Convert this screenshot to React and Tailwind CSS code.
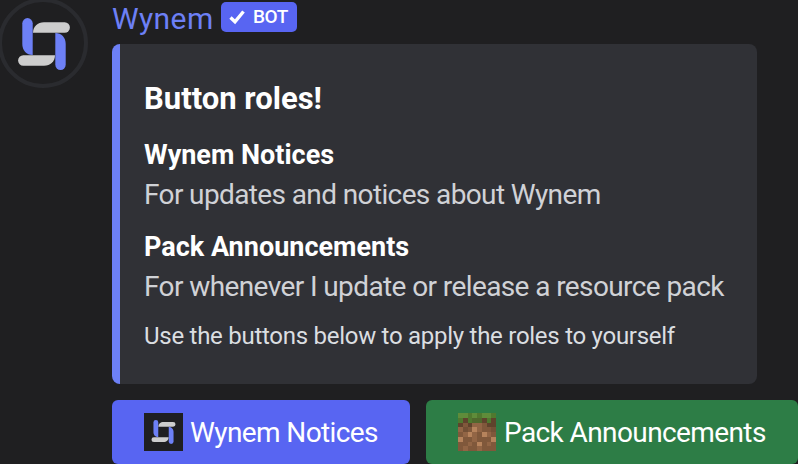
const DIRT = [
  "aababaab", "bdbccdbd", "dfdggfdd", "gefhgffe", "fghgfhgf", "hffgfffh", "ffgfhfgf", "fgffgfff",
];
const COLORS = {
  a: "#5f8c3a", b: "#50792f", c: "#50682d", d: "#5f432c", e: "#735036", f: "#80583b", g: "#926545", h: "#b6835c",
};

function Logo({ className, viewBox }) {
  return (
    <svg className={className} viewBox={viewBox}>
      <g fill="#6d80f6">
        <path d="M22.3 23.300a5.200 5.200 0 0 1 10.400 0V55c-6.200 0-10.400-4.500-10.400-11z" />
        <path d="M65.700 64.700a5.200 5.200 0 0 1-10.400 0V33c6.200 0 10.400 4.500 10.400 11z" />
      </g>
      <g fill="#cdcdcd">
        <path d="M64.700 22.300a5.200 5.200 0 0 1 0 10.400H33c0-6.200 4.500-10.400 11-10.400z" />
        <path d="M23.300 65.700a5.200 5.200 0 0 1 0-10.400H55c0 6.200-4.500 10.400-11 10.400z" />
      </g>
    </svg>
  );
}

function Dirt() {
  return (
    <svg className="h-[38px] w-[38px] shrink-0" viewBox="0 0 8 8" shapeRendering="crispEdges">
      {DIRT.flatMap((row, y) =>
        [...row].map((c, x) => <rect key={`${x}-${y}`} x={x} y={y} width="1" height="1" fill={COLORS[c]} />),
      )}
    </svg>
  );
}

export default function App() {
  return (
    <div className="flex h-[464px] w-[798px] overflow-hidden whitespace-nowrap bg-[#1f1f21] font-['Roboto',sans-serif] text-white">
      <div className="-mt-0.5 -ml-0.5 h-[90px] w-[90px] shrink-0 rounded-full border-4 border-[#2a2b2f]">
        <Logo className="h-[82px] w-[82px]" viewBox="2 2 82 82" />
      </div>
      <div className="ml-6 flex flex-col">
        <header className="flex h-[44px] items-start">
          <span className="w-[109px] text-[30px] leading-[37px] tracking-[0.4px] text-[#6d80f6]">Wynem</span>
          <span className="mt-0.5 flex h-[30px] w-[76px] items-center gap-2 rounded-[5px] bg-[#5865f2] pl-2 text-[19px] font-medium tracking-[-0.4px]">
            <svg className="h-4 w-4" viewBox="0 0 16 16" fill="none" stroke="white" strokeWidth="3.4">
              <path d="M1.500 8.500 6 12.800 14.500 2.500" />
            </svg>
            <span>BOT</span>
          </span>
        </header>
        <section className="flex h-[340px] w-[645px] flex-col rounded-[8px] border-l-8 border-[#6d80f6] bg-[#303136] pl-6 pt-[35px]">
          <h1 className="h-[56px] text-[31px] font-bold leading-[40px]">Button roles!</h1>
          <h2 className="h-[40px] text-[27px] font-bold leading-[40px]">Wynem Notices</h2>
          <p className="h-[52px] text-[28px] leading-[40px] tracking-[-0.62px] text-[#d0d2d6]">For updates and notices about Wynem</p>
          <h2 className="h-[40px] text-[27px] font-bold leading-[40px]">Pack Announcements</h2>
          <p className="h-[51px] text-[28px] leading-[40px] tracking-[-0.6px] text-[#d0d2d6]">For whenever I update or release a resource pack</p>
          <p className="text-[24px] leading-[36px] tracking-[-0.27px] text-[#dbdee1]">Use the buttons below to apply the roles to yourself</p>
        </section>
        <div className="mt-4 flex gap-4">
          <button className="flex h-16 w-[298px] items-center gap-2 rounded-[6px] bg-[#5865f2] pl-8 text-[28px] tracking-[-0.6px]">
            <span className="h-[38px] w-[39px] shrink-0 bg-[#1f1f21]"><Logo className="h-full w-full" viewBox="3 3 82 82" /></span>
            <span className="-ml-px pt-0.5">Wynem Notices</span>
          </button>
          <button className="flex h-16 w-[372px] items-center gap-2 rounded-[6px] bg-[#2d7d46] pl-8 text-[28px] tracking-[-0.6px]">
            <Dirt />
            <span className="pt-0.5">Pack Announcements</span>
          </button>
        </div>
      </div>
    </div>
  );
}
